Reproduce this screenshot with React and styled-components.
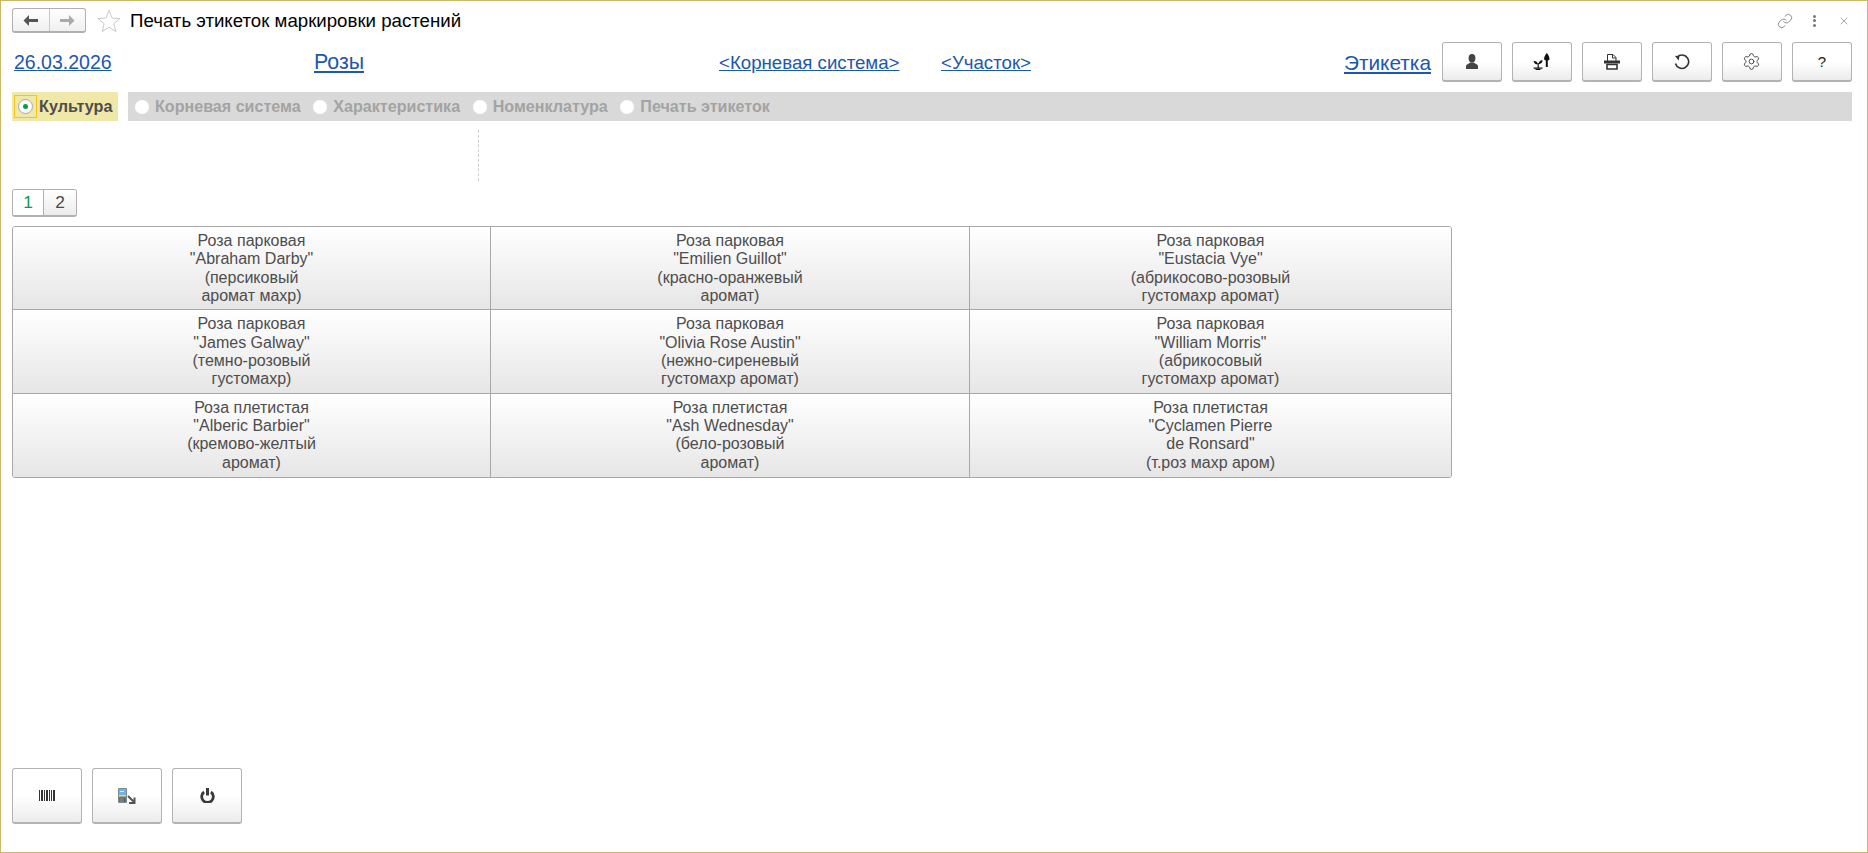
import React from "react";
import styled, { createGlobalStyle } from "styled-components";
import { Link as LinkIcon, Settings, X } from "lucide-react";

const GlobalStyle = createGlobalStyle`
    html, body {
        margin: 0;
        padding: 0;
        background: #fff;
    }
    * {
        box-sizing: border-box;
    }
`;

const Window = styled.div`
    width: 100%;
    height: 100vh;
    border: 1px solid #c9b968;
    font-family: "Liberation Sans", Arial, sans-serif;
    display: flex;
    flex-direction: column;
    padding: 7px 15px 28px 11px;
    background: #fff;
    overflow: hidden;
`;

const TitleRow = styled.div`
    display: flex;
    align-items: center;
    height: 25px;
`;

const NavGroup = styled.div`
    display: flex;
    width: 74px;
    height: 25px;
    border: 1px solid #b0b0b0;
    border-bottom-width: 2px;
    border-radius: 3px;
    background: linear-gradient(#fff, #f0f0f0);
`;

const NavButton = styled.div`
    flex: 1;
    display: flex;
    align-items: center;
    justify-content: center;

    & + & {
        border-left: 1px solid #c8c8c8;
    }
`;

const StarBox = styled.div`
    display: flex;
    margin-left: 11px;
    margin-right: 9px;
`;

const Title = styled.div`
    font-size: 18.67px;
    color: #000;
    white-space: nowrap;
`;

const WindowTools = styled.div`
    margin-left: auto;
    margin-right: 2px;
    display: flex;
    align-items: center;
    gap: 18px;
    color: #666;
`;

const Dots = styled.div`
    display: flex;
    flex-direction: column;
    gap: 1.5px;
    margin-left: 2px;
    margin-right: 4px;

    & > i {
        display: block;
        width: 3px;
        height: 3px;
        border-radius: 50%;
        background: #777;
    }
`;

const LinkRow = styled.div`
    display: grid;
    grid-template-columns: 300px 405px 222px 403px 1fr;
    align-items: center;
    height: 40px;
    margin-top: 9px;
    padding-left: 2px;
`;

const HeadLink = styled.a`
    justify-self: start;
    margin-top: 1px;
    font-size: ${(props) => props.$size || 19.5}px;
    color: #1c57b0;
    text-decoration: underline;
    white-space: nowrap;
`;

const ToolCell = styled.div`
    display: flex;
    align-items: center;
    gap: 10px;
`;

const LabelLink = styled(HeadLink)`
    margin-right: 1px;
`;

const ToolButton = styled.div`
    width: 60px;
    height: 40px;
    display: flex;
    align-items: center;
    justify-content: center;
    border: 1px solid #b3b3b3;
    border-bottom-width: 2px;
    border-radius: 3px;
    background: linear-gradient(#fff 50%, #ececec);
    font-size: 15px;
    color: #222;
`;

const RadioRow = styled.div`
    display: flex;
    height: 29px;
    margin-top: 10px;
    gap: 10px;
`;

const ActiveRadio = styled.div`
    display: flex;
    align-items: center;
    width: 106px;
    background: #efe8a9;
    padding-left: 2px;
    font-size: 16.2px;
    font-weight: 700;
    color: #4d4d4d;
`;

const FocusBox = styled.div`
    width: 23px;
    height: 23px;
    display: flex;
    align-items: center;
    justify-content: center;
    border: 1px solid #f5c518;
    margin-right: 2px;
`;

const RadioDot = styled.div`
    width: 15px;
    height: 15px;
    border-radius: 50%;
    border: 1px solid #a8a8a8;
    background: #fff;
    display: flex;
    align-items: center;
    justify-content: center;

    &::after {
        content: "";
        width: 5px;
        height: 5px;
        border-radius: 50%;
        background: #0a9a4a;
    }
`;

const DisabledBar = styled.div`
    flex: 1;
    display: flex;
    align-items: center;
    background: #d9d9d9;
    padding-left: 7px;
    gap: 12.6px;
`;

const DisabledOption = styled.div`
    display: flex;
    align-items: center;
    gap: 6px;
    font-size: 16.1px;
    font-weight: 700;
    color: #a3a3a3;
    white-space: nowrap;

    &::before {
        content: "";
        width: 14px;
        height: 14px;
        border-radius: 50%;
        background: #fff;
    }
`;

const Splitter = styled.div`
    width: 0;
    height: 51px;
    margin-left: 466px;
    margin-top: 9px;
    border-left: 1px dashed #cfcfcf;
`;

const Tabs = styled.div`
    display: flex;
    width: 65px;
    height: 28px;
    margin-top: 8px;
    border: 1px solid #b0b0b0;
    border-bottom-width: 2px;
    border-radius: 3px;
    font-size: 17.33px;
    overflow: hidden;
`;

const Tab = styled.div`
    width: ${(props) => (props.$active ? "30px" : "auto")};
    flex: ${(props) => (props.$active ? "none" : 1)};
    display: flex;
    align-items: center;
    justify-content: center;
    color: ${(props) => (props.$active ? "#0a9a4a" : "#4a4a4a")};
    background: ${(props) => (props.$active ? "#fff" : "linear-gradient(#fff, #ececec)")};

    & + & {
        border-left: 1px solid #b0b0b0;
    }
`;

const Grid = styled.div`
    display: grid;
    grid-template-columns: 478px 479px 1fr;
    grid-auto-rows: 83.4px;
    width: 1440px;
    margin-top: 9px;
    border: 1px solid #a8a8a8;
    border-radius: 3px;
    overflow: hidden;
`;

const Cell = styled.div`
    display: flex;
    align-items: flex-start;
    justify-content: center;
    padding-top: 5px;
    text-align: center;
    font-size: 16px;
    line-height: 18.3px;
    color: #4d4d4d;
    white-space: pre-line;
    background: linear-gradient(#fff, #e6e6e6);
    border-right: 1px solid #a8a8a8;
    border-bottom: 1px solid #a8a8a8;

    &:nth-child(3n) {
        border-right: none;
    }
    &:nth-last-child(-n + 3) {
        border-bottom: none;
    }
`;

const BottomRow = styled.div`
    display: flex;
    gap: 10px;
    margin-top: auto;
`;

const BottomButton = styled.div`
    width: 70px;
    height: 56px;
    display: flex;
    align-items: center;
    justify-content: center;
    border: 1px solid #b3b3b3;
    border-bottom-width: 2px;
    border-radius: 3px;
    background: linear-gradient(#fff 50%, #ececec);
`;

const cells = [
    'Роза парковая\n"Abraham Darby"\n(персиковый\nаромат махр)',
    'Роза парковая\n"Emilien Guillot"\n(красно-оранжевый\nаромат)',
    'Роза парковая\n"Eustacia Vye"\n(абрикосово-розовый\nгустомахр аромат)',
    'Роза парковая\n"James Galway"\n(темно-розовый\nгустомахр)',
    'Роза парковая\n"Olivia Rose Austin"\n(нежно-сиреневый\nгустомахр аромат)',
    'Роза парковая\n"William Morris"\n(абрикосовый\nгустомахр аромат)',
    'Роза плетистая\n"Alberic Barbier"\n(кремово-желтый\nаромат)',
    'Роза плетистая\n"Ash Wednesday"\n(бело-розовый\nаромат)',
    'Роза плетистая\n"Cyclamen Pierre\nde Ronsard"\n(т.роз махр аром)',
];

const ArrowLeft = ({ color }) => (
    <svg width="15" height="11" viewBox="0 0 15 11">
        <path d="M6 0 .5 5.500 6 11V7h9V4H6z" fill={color} />
    </svg>
);

const ArrowRight = ({ color }) => (
    <svg width="15" height="11" viewBox="0 0 15 11">
        <path d="M9 0l5.500 5.500L9 11V7H0V4h9z" fill={color} />
    </svg>
);

const StarIcon = () => (
    <svg width="24" height="24" viewBox="0 0 24 24">
        <path
            d="M12 1.500l3 7.500 8 .6-6.100 5.100 1.900 7.800L12 18.300l-6.800 4.200 1.900-7.800L1 9.600l8-.6z"
            fill="none"
            stroke="#c9c9c9"
        />
    </svg>
);

const UserIcon = () => (
    <svg width="12" height="15" viewBox="0 0 12 15">
        <ellipse cx="6" cy="4.200" rx="3.400" ry="4.200" fill="#444" />
        <path d="M0 15v-2.800C0 10.500 2.500 9.800 4.300 8.500h3.400c1.800 1.300 4.300 2 4.300 3.700V15z" fill="#444" />
    </svg>
);

const PlantIcon = () => (
    <svg width="17" height="17" viewBox="0 0 17 17">
        <path d="M13.800 0c1.400 1.300 2.700 4 2.700 5.700 0 1-.7 1.600-1.700 1.800V14h-2V7.500c-1-.2-1.700-.8-1.700-1.800C11.100 4 12.400 1.300 13.800 0z" fill="#111" />
        <path d="M.5 8c2.300-.3 4 .8 4.500 3.300C2.800 11.600 1 10.500.5 8zM9.500 7c.2 2.500-1.500 4-4 4.200C5.500 9 7 7.300 9.500 7z" fill="#111" />
        <rect x="4.600" y="10" width="1.200" height="5" fill="#111" />
        <rect x="0.500" y="14.500" width="9" height="1.200" fill="#111" />
        <rect x="2.500" y="15.700" width="5" height="1.300" fill="#111" />
    </svg>
);

const PrinterIcon = () => (
    <svg width="16" height="16" viewBox="0 0 16 16">
        <path d="M3.500.500h5.500l3 3v4h-8.500z" fill="#fff" stroke="#333" />
        <path d="M8.500.500v3.500h3.500" fill="none" stroke="#333" />
        <path d="M0 6.500h16v3H0z" fill="#333" />
        <path d="M3 10.500h10v4.500H3z" fill="#fff" stroke="#333" strokeWidth="1.600" />
    </svg>
);

const RefreshIcon = () => (
    <svg width="16" height="16" viewBox="0 0 16 16">
        <path d="M3 3.200A6.700 6.700 0 1 1 1.500 9.500" fill="none" stroke="#333" strokeWidth="1.600" />
        <path d="M.8 1.800l4.700.4-.9 4.400z" fill="#333" />
    </svg>
);

const BarcodeIcon = () => (
    <svg width="16" height="11" viewBox="0 0 16 11">
        <path
            d="M0 0h1v11H0zM2 0h2v11H2zM5 0h1v11H5zM7 0h2v11H7zM10 0h1v11h-1zM12 0h1v11h-1zM14 0h2v11h-2z"
            fill="#333"
        />
    </svg>
);

const TerminalIcon = () => (
    <svg width="18" height="16" viewBox="0 0 18 16">
        <rect x="0" y="0" width="9" height="15" rx="1" fill="#7a8a92" />
        <rect x="1" y="1" width="7" height="6" fill="#6fb4e8" />
        <rect x="2" y="3" width="4" height="1" fill="#e4f2fb" />
        <rect x="1" y="7" width="7" height="1.500" fill="#f0d840" />
        <path d="M1.500 9.500h6v4.500h-6z" fill="#5a5a5a" />
        <path d="M2.500 10.500h1v1h-1zM4.500 10.500h1v1h-1zM2.500 12.500h1v1h-1zM4.500 12.500h1v1h-1z" fill="#ddd" />
        <path d="M10 8l6 6M11 15h5.500V9.500" fill="none" stroke="#555" strokeWidth="2" />
    </svg>
);

const PowerIcon = () => (
    <svg width="15" height="15" viewBox="0 0 15 15">
        <path d="M4.100 4a5.800 5.800 0 1 0 6.800 0" fill="none" stroke="#3a3a3a" strokeWidth="2.800" />
        <rect x="6" y="0" width="3" height="7.500" fill="#3a3a3a" />
    </svg>
);

export default function App() {
    return (
        <Window>
            <GlobalStyle />
            <TitleRow>
                <NavGroup>
                    <NavButton>
                        <ArrowLeft color="#555" />
                    </NavButton>
                    <NavButton>
                        <ArrowRight color="#aaa" />
                    </NavButton>
                </NavGroup>
                <StarBox>
                    <StarIcon />
                </StarBox>
                <Title>Печать этикеток маркировки растений</Title>
                <WindowTools>
                    <LinkIcon size={16} strokeWidth={1.1} />
                    <Dots>
                        <i />
                        <i />
                        <i />
                    </Dots>
                    <X size={12} strokeWidth={1.2} />
                </WindowTools>
            </TitleRow>
            <LinkRow>
                <HeadLink>26.03.2026</HeadLink>
                <HeadLink $size={21.33}>Розы</HeadLink>
                <HeadLink $size={18.67}>{"<Корневая система>"}</HeadLink>
                <HeadLink $size={18.67}>{"<Участок>"}</HeadLink>
                <ToolCell>
                    <LabelLink $size={20.8}>Этикетка</LabelLink>
                    <ToolButton>
                        <UserIcon />
                    </ToolButton>
                    <ToolButton>
                        <PlantIcon />
                    </ToolButton>
                    <ToolButton>
                        <PrinterIcon />
                    </ToolButton>
                    <ToolButton>
                        <RefreshIcon />
                    </ToolButton>
                    <ToolButton>
                        <Settings size={19} strokeWidth={1.2} color="#444" />
                    </ToolButton>
                    <ToolButton>?</ToolButton>
                </ToolCell>
            </LinkRow>
            <RadioRow>
                <ActiveRadio>
                    <FocusBox>
                        <RadioDot />
                    </FocusBox>
                    Культура
                </ActiveRadio>
                <DisabledBar>
                    <DisabledOption>Корневая система</DisabledOption>
                    <DisabledOption>Характеристика</DisabledOption>
                    <DisabledOption>Номенклатура</DisabledOption>
                    <DisabledOption>Печать этикеток</DisabledOption>
                </DisabledBar>
            </RadioRow>
            <Splitter />
            <Tabs>
                <Tab $active>1</Tab>
                <Tab>2</Tab>
            </Tabs>
            <Grid>
                {cells.map((text) => (
                    <Cell key={text}>{text}</Cell>
                ))}
            </Grid>
            <BottomRow>
                <BottomButton>
                    <BarcodeIcon />
                </BottomButton>
                <BottomButton>
                    <TerminalIcon />
                </BottomButton>
                <BottomButton>
                    <PowerIcon />
                </BottomButton>
            </BottomRow>
        </Window>
    );
}
